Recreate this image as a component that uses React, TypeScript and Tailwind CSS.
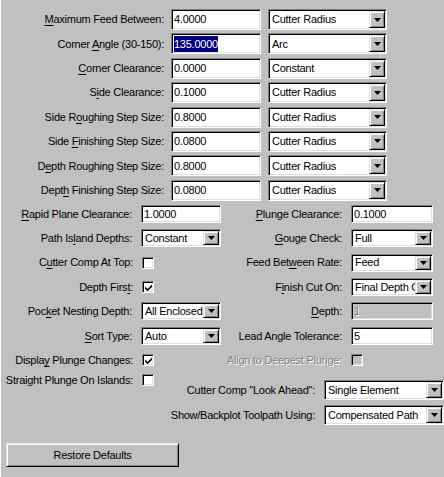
import React from 'react';

// Win9x-style 3D edges
const sunken =
  'border border-t-[#808080] border-l-[#808080] border-b-white border-r-white shadow-[inset_1px_1px_0_#000,inset_-1px_-1px_0_#dfdfdf]';
const raised =
  'border border-t-[#dfdfdf] border-l-[#dfdfdf] border-b-black border-r-black shadow-[inset_1px_1px_0_#fff,inset_-1px_-1px_0_#808080]';

function U({ children }: { children: React.ReactNode }) {
  return <span className="underline underline-offset-[2px]">{children}</span>;
}

function Field({ value, className, disabled, selected }: { value: string; className: string; disabled?: boolean; selected?: boolean }) {
  return (
    <div
      className={`${sunken} ${disabled ? 'bg-[#c0c0c0] text-[#808080] [text-shadow:1px_1px_0_#fff]' : 'bg-white'} flex items-center pl-[2px] overflow-hidden whitespace-nowrap ${className}`}
    >
      {selected ? <span className="bg-[#000080] text-white">{value}</span> : value}
    </div>
  );
}

function Combo({ value, className }: { value: string; className: string }) {
  return (
    <div className={`${sunken} bg-white flex items-stretch p-[1px] ${className}`}>
      <div className="flex-1 flex items-center pl-[2px] overflow-hidden whitespace-nowrap">{value}</div>
      <div className={`${raised} w-[16px] bg-[#c0c0c0] flex items-center justify-center`}>
        <svg width="7" height="4" viewBox="0 0 7 4">
          <path d="M0 0h7L3.5 4z" fill="#000" />
        </svg>
      </div>
    </div>
  );
}

function Check({ checked, disabled }: { checked?: boolean; disabled?: boolean }) {
  return (
    <div className={`${sunken} w-[12px] h-[12px] shrink-0 ${disabled ? 'bg-[#c0c0c0]' : 'bg-white'} flex items-center justify-center`}>
      {checked && (
        <svg width="7" height="7" viewBox="0 0 7 7">
          <path d="M0 2.5L2.5 5L7 0.5V3L2.5 7.2L0 4.8Z" fill="#000" />
        </svg>
      )}
    </div>
  );
}

function TopRow({ label, value, mode, selected }: { label: React.ReactNode; value: string; mode: string; selected?: boolean }) {
  return (
    <div className="flex items-center h-[21px]">
      <div className="w-[164px] text-right whitespace-nowrap">{label}</div>
      <Field value={value} selected={selected} className="ml-[7px] w-[90px] h-[21px]" />
      <Combo value={mode} className="ml-[7px] w-[119px] h-[21px]" />
    </div>
  );
}

function Cell({ label, w, disabled, children }: { label: React.ReactNode; w: string; disabled?: boolean; children: React.ReactNode }) {
  return (
    <div className="flex items-center h-[18px]">
      <div className={`${w} text-right whitespace-nowrap ${disabled ? 'text-[#808080] [text-shadow:1px_1px_0_#fff]' : ''}`}>{label}</div>
      <div className="ml-[9px]">{children}</div>
    </div>
  );
}

export default function App() {
  const L = 'w-[133px]';
  const R = 'w-[121px]';
  const ctlL = 'w-[80px] h-[18px]';
  const ctlR = 'w-[82px] h-[18px]';

  return (
    <div className="w-[444px] h-[477px] bg-[#c0c0c0] overflow-hidden shadow-[inset_1px_0_0_#fff] text-black text-[11px] tracking-[-0.25px] font-['Liberation_Sans',Arial,sans-serif]">
      {/* cutter-radius based settings */}
      <div className="pt-[9px] flex flex-col gap-[3.4px]">
        <TopRow label={<><U>M</U>aximum Feed Between:</>} value="4.0000" mode="Cutter Radius" />
        <TopRow label={<>Corner <U>A</U>ngle (30-150):</>} value="135.0000" mode="Arc" selected />
        <TopRow label={<><U>C</U>orner Clearance:</>} value="0.0000" mode="Constant" />
        <TopRow label={<>S<U>i</U>de Clearance:</>} value="0.1000" mode="Cutter Radius" />
        <TopRow label={<>Side R<U>o</U>ughing Step Size:</>} value="0.8000" mode="Cutter Radius" />
        <TopRow label={<>Side <U>F</U>inishing Step Size:</>} value="0.0800" mode="Cutter Radius" />
        <TopRow label={<>D<U>e</U>pth Roughing Step Size:</>} value="0.8000" mode="Cutter Radius" />
        <TopRow label={<>Dept<U>h</U> Finishing Step Size:</>} value="0.0800" mode="Cutter Radius" />
      </div>

      {/* two column options */}
      <div className="grid grid-cols-[221px_223px] gap-y-[6.4px] mt-[4.2px]">
        <Cell label={<><U>R</U>apid Plane Clearance:</>} w={L}>
          <Field value="1.0000" className={ctlL} />
        </Cell>
        <Cell label={<><U>P</U>lunge Clearance:</>} w={R}>
          <Field value="0.1000" className={ctlR} />
        </Cell>

        <Cell label={<>Path Is<U>l</U>and Depths:</>} w={L}>
          <Combo value="Constant" className={ctlL} />
        </Cell>
        <Cell label={<><U>G</U>ouge Check:</>} w={R}>
          <Combo value="Full" className={ctlR} />
        </Cell>

        <Cell label={<>C<U>u</U>tter Comp At Top:</>} w={L}>
          <Check />
        </Cell>
        <Cell label={<>Feed Bet<U>w</U>een Rate:</>} w={R}>
          <Combo value="Feed" className={ctlR} />
        </Cell>

        <Cell label={<>Depth Firs<U>t</U>:</>} w={L}>
          <Check checked />
        </Cell>
        <Cell label={<>F<U>i</U>nish Cut On:</>} w={R}>
          <Combo value="Final Depth Only" className={ctlR} />
        </Cell>

        <Cell label={<>Poc<U>k</U>et Nesting Depth:</>} w={L}>
          <Combo value="All Enclosed" className={ctlL} />
        </Cell>
        <Cell label={<><U>D</U>epth:</>} w={R}>
          <Field value="1" disabled className={ctlR} />
        </Cell>

        <Cell label={<><U>S</U>ort Type:</>} w={L}>
          <Combo value="Auto" className={ctlL} />
        </Cell>
        <Cell label="Lead Angle Tolerance:" w={R}>
          <Field value="5" className={ctlR} />
        </Cell>

        <Cell label={<>Displa<U>y</U> Plunge Changes:</>} w={L}>
          <Check checked />
        </Cell>
        <Cell label="Align to Deepest Plunge:" w={R} disabled>
          <Check disabled />
        </Cell>
      </div>

      <div className="flex mt-[5px]">
        <div className="flex items-center h-[12px]">
          <div className={`${L} text-right whitespace-nowrap`}>Straight Plunge On Islands:</div>
          <div className="ml-[9px]">
            <Check />
          </div>
        </div>
        <div className="flex-1 flex flex-col items-end pt-[6px] gap-[5px]">
          <div className="flex items-center h-[20px]">
            <div className="text-right whitespace-nowrap">Cutter Comp "Look Ahead":</div>
            <Combo value="Single Element" className="ml-[9px] w-[120px] h-[20px]" />
          </div>
          <div className="flex items-center h-[20px]">
            <div className="text-right whitespace-nowrap">Show/Backplot Toolpath Using:</div>
            <Combo value="Compensated Path" className="ml-[9px] w-[120px] h-[20px]" />
          </div>
        </div>
      </div>

      <button className={`${raised} mt-[18px] ml-[6px] w-[173px] h-[24px] bg-[#c0c0c0] flex items-center justify-center`}>
        Restore Defaults
      </button>
    </div>
  );
}
